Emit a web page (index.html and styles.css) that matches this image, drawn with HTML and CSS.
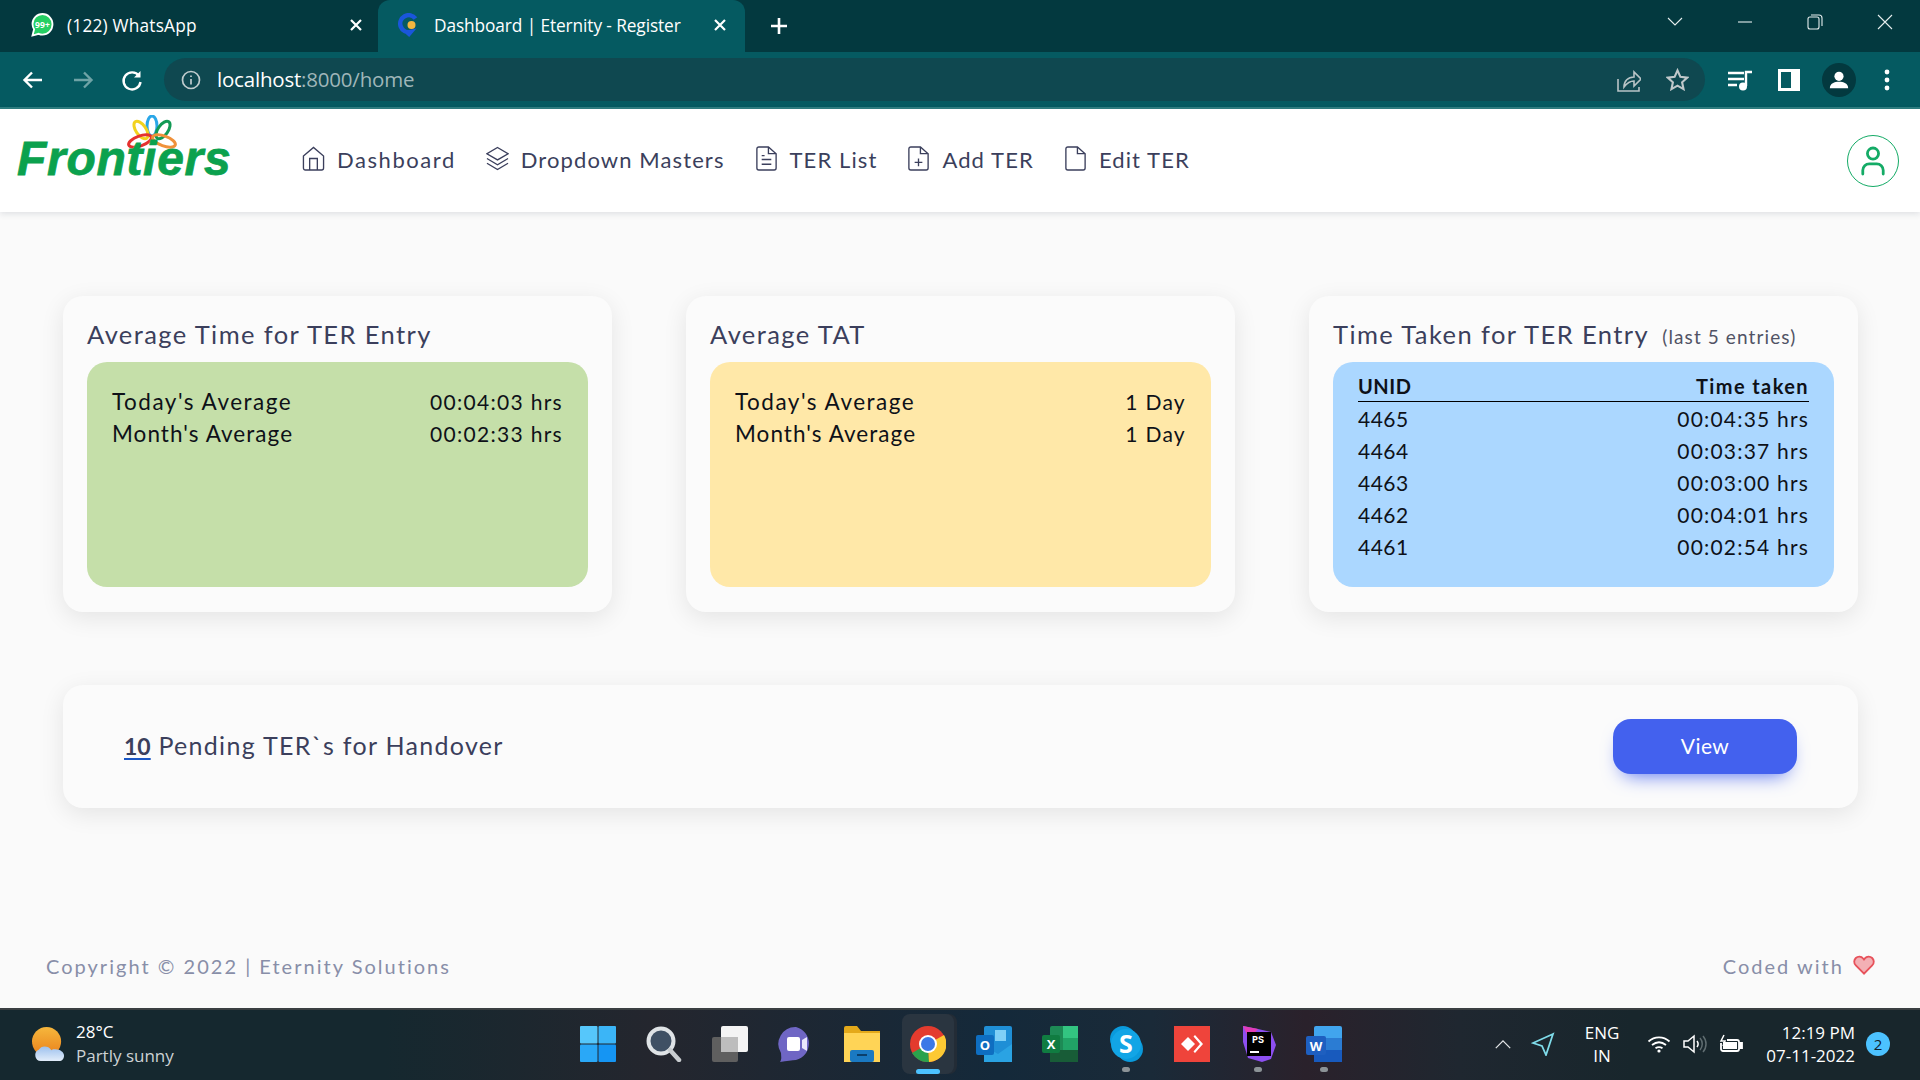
FILE: index.html
```html
<!DOCTYPE html>
<html lang="en">
<head>
<meta charset="utf-8">
<title>Dashboard | Eternity - Register</title>
<link rel="stylesheet" href="styles.css">
</head>
<body>
<div class="screen">
  <div class="tabstrip">
    <div class="tab tab-one">
      <svg class="tab-icon" viewBox="0 0 22 24"><path d="M11 1C5.500 1 1 5.500 1 11c0 2 .6 3.800 1.600 5.300L1 22.500l6.200-1.700C8.400 21.300 9.700 21.600 11 21.600c5.500 0 10-4.700 10-10.300S16.500 1 11 1z" fill="#25cf63" stroke="#fff" stroke-width="1.800"/><text x="11" y="15" text-anchor="middle" class="tab-badge">99+</text></svg>
      <span class="tab-title">(122) WhatsApp</span>
      <svg class="tab-close" viewBox="0 0 14 14"><path d="M2 2l10 10M12 2L2 12"/></svg>
    </div>
    <div class="tab tab-two">
      <svg class="tab-icon" viewBox="0 0 22 24"><path d="M17 5.500A8.500 8.500 0 1 0 12 19l-3 3.500" fill="none" stroke="#1a56db" stroke-width="4.500"/><circle cx="13" cy="12" r="4" fill="#f4b63f"/></svg>
      <span class="tab-title">Dashboard | Eternity - Register</span>
      <svg class="tab-close" viewBox="0 0 14 14"><path d="M2 2l10 10M12 2L2 12"/></svg>
    </div>
    <svg class="new-tab" viewBox="0 0 20 20"><path d="M10 2v16M2 10h16"/></svg>
    <div class="window-controls">
      <svg viewBox="0 0 18 12"><path d="M2 2l7 7 7-7"/></svg>
      <svg viewBox="0 0 18 12"><path d="M2 6h14"/></svg>
      <svg viewBox="0 0 18 18"><rect x="2" y="4" width="11" height="12" rx="2"/><path d="M5 2h8a3 3 0 0 1 3 3v8"/></svg>
      <svg viewBox="0 0 18 18"><path d="M2 2l14 14M16 2L2 16"/></svg>
    </div>
  </div>

  <div class="toolbar">
    <svg class="tool-btn" viewBox="0 0 24 24"><path d="M21 12H4M11 4.500L3.500 12l7.500 7.500" class="tool-line"/></svg>
    <svg class="tool-btn" viewBox="0 0 24 24"><path d="M3 12h17M13 4.500l7.500 7.500-7.500 7.500" class="tool-line tool-dim"/></svg>
    <svg class="tool-btn" viewBox="0 0 24 24"><path d="M19 8a8.500 8.500 0 1 0 1.500 6" class="tool-line"/><path d="M20.500 3v6.500H14z" fill="#fff"/></svg>
    <div class="omnibox">
      <svg class="info" viewBox="0 0 20 20"><circle cx="10" cy="10" r="8.500"/><path d="M10 9v5.500M10 5.500v1.500"/></svg>
      <span class="url"><span class="host">localhost</span>:8000/home</span>
      <span class="omni-space"></span>
      <svg class="omni-share" viewBox="0 0 24 24"><path d="M1 11v12h21v-4M7 19c0-6 4-10 10-10V4l7 7-7 7v-5c-4 0-7 2-10 6z"/></svg>
      <svg class="omni-star" viewBox="0 0 24 24"><path d="M12 2.500l3 6.700 7.200.8-5.400 4.900 1.500 7.100-6.300-3.600-6.300 3.600 1.500-7.100L1.800 10l7.200-.8z"/></svg>
    </div>
    <svg class="media" viewBox="0 0 26 22"><path d="M1 4h16M1 10h16M1 16h9" class="tool-line"/><path d="M19 17V3h6" class="tool-line"/><circle cx="16" cy="17.500" r="4" fill="#fff"/></svg>
    <svg class="side" viewBox="0 0 22 22"><path fill-rule="evenodd" d="M0 0h22v22H0zM3 3v16h10V3z" fill="#fff"/></svg>
    <div class="avatar"><svg viewBox="0 0 24 24"><circle cx="12" cy="8" r="5" fill="#fff"/><path d="M2 21c0-5 5-7 10-7s10 2 10 7z" fill="#fff"/></svg></div>
    <svg class="kebab" viewBox="0 0 6 22"><circle cx="3" cy="3" r="2.400"/><circle cx="3" cy="11" r="2.400"/><circle cx="3" cy="19" r="2.400"/></svg>
  </div>

  <header class="nav">
    <div class="logo">
      <svg class="flower" viewBox="0 0 52 36">
        <ellipse cx="26" cy="11" rx="5" ry="10" fill="none" stroke="#2aa7e8" stroke-width="3"/>
        <ellipse cx="15" cy="15" rx="5" ry="10" transform="rotate(-35 15 15)" fill="none" stroke="#f2d21f" stroke-width="3"/>
        <ellipse cx="37" cy="15" rx="5" ry="10" transform="rotate(35 37 15)" fill="none" stroke="#129a55" stroke-width="3"/>
        <ellipse cx="14" cy="26" rx="12" ry="5" transform="rotate(-20 14 26)" fill="none" stroke="#e5312f" stroke-width="3"/>
        <ellipse cx="38" cy="26" rx="12" ry="5" transform="rotate(20 38 26)" fill="none" stroke="#f0913a" stroke-width="3"/>
      </svg>
      <span class="logo-text">Frontiers</span>
    </div>
    <nav class="menu">
      <a class="menu-item menu-first"><svg viewBox="0 0 24 26"><path d="M1.500 10.500L12 1.500l10.500 9V23a2 2 0 0 1-2 2h-17a2 2 0 0 1-2-2z"/><path d="M8 25V13h8v12"/></svg><span>Dashboard</span></a>
      <a class="menu-item"><svg viewBox="0 0 24 26"><path d="M12 1.500L23 8l-11 6.500L1 8z"/><path d="M1 13l11 6.500L23 13M1 18l11 6.500L23 18"/></svg><span>Dropdown Masters</span></a>
      <a class="menu-item"><svg viewBox="0 0 22 26"><path d="M13 1H3a2 2 0 0 0-2 2v20a2 2 0 0 0 2 2h16a2 2 0 0 0 2-2V8z"/><path d="M13 1v7h8M6 10h3M6 14h10M6 19h10"/></svg><span>TER List</span></a>
      <a class="menu-item"><svg viewBox="0 0 22 26"><path d="M13 1H3a2 2 0 0 0-2 2v20a2 2 0 0 0 2 2h16a2 2 0 0 0 2-2V8z"/><path d="M13 1v7h8M11 13v8M7 17h8"/></svg><span>Add TER</span></a>
      <a class="menu-item"><svg viewBox="0 0 22 26"><path d="M13 1H3a2 2 0 0 0-2 2v20a2 2 0 0 0 2 2h16a2 2 0 0 0 2-2V8z"/><path d="M13 1v7h8"/></svg><span>Edit TER</span></a>
    </nav>
    <div class="profile"><svg viewBox="0 0 28 32"><circle cx="14" cy="8" r="6"/><path d="M3 30v-4a7 7 0 0 1 7-7h8a7 7 0 0 1 7 7v4"/></svg></div>
  </header>

  <main class="main">
    <section class="cards">
      <article class="card">
        <h2 class="card-title">Average Time for TER Entry</h2>
        <div class="panel panel-green">
          <div class="row"><span class="label">Today's Average</span><span>00:04:03 hrs</span></div>
          <div class="row"><span class="label label-tight">Month's Average</span><span>00:02:33 hrs</span></div>
        </div>
      </article>
      <article class="card">
        <h2 class="card-title">Average TAT</h2>
        <div class="panel panel-yellow">
          <div class="row"><span class="label">Today's Average</span><span>1 Day</span></div>
          <div class="row"><span class="label label-tight">Month's Average</span><span>1 Day</span></div>
        </div>
      </article>
      <article class="card">
        <h2 class="card-title">Time Taken for TER Entry <small class="card-note">(last 5 entries)</small></h2>
        <div class="panel panel-blue">
          <div class="row row-head"><span>UNID</span><span>Time taken</span></div>
          <div class="row"><span>4465</span><span>00:04:35 hrs</span></div>
          <div class="row"><span>4464</span><span>00:03:37 hrs</span></div>
          <div class="row"><span>4463</span><span>00:03:00 hrs</span></div>
          <div class="row"><span>4462</span><span>00:04:01 hrs</span></div>
          <div class="row"><span>4461</span><span>00:02:54 hrs</span></div>
        </div>
      </article>
    </section>
    <section class="pending">
      <p class="pending-text"><a class="pending-count">10</a> Pending TER`s for Handover</p>
      <button class="view-btn">View</button>
    </section>
    <footer class="footer">
      <span>Copyright © 2022 | Eternity Solutions</span>
      <span class="coded">Coded with <svg viewBox="0 0 24 22"><path d="M12 20.500L3 11.500C.5 9 .8 5.500 3 3.300c2.400-2.200 6-2 8 .5l1 1.200 1-1.200c2-2.500 5.600-2.700 8-.5 2.200 2.200 2.500 5.700 0 8.200z"/></svg></span>
    </footer>
  </main>

  <div class="taskbar">
    <div class="weather">
      <svg class="weather-icon" viewBox="0 0 34 36"><defs><linearGradient id="sun" x1="0" y1="0" x2="0" y2="1"><stop offset="0" stop-color="#f6b73c"/><stop offset="1" stop-color="#e9801c"/></linearGradient><linearGradient id="cl" x1="0" y1="0" x2="0" y2="1"><stop offset="0" stop-color="#9cc0ee"/><stop offset="1" stop-color="#e2edfa"/></linearGradient></defs><circle cx="15" cy="15" r="15" fill="url(#sun)"/><path d="M9 35a6 6 0 0 1-2-11.500 7 7 0 0 1 6-3.500c3 0 5 1 7 4 1-1 2-1 4-1 5 0 9 3 9 6.500 0 3-2 5.500-5 5.500z" fill="url(#cl)"/></svg>
      <div class="weather-text"><span class="temp">28°C</span><span class="cond">Partly sunny</span></div>
    </div>
    <div class="apps">
      <div class="app"><svg viewBox="0 0 36 36"><rect x="0" y="0" width="17.500" height="17.500" rx="1" fill="#56c7fb"/><rect x="18.500" y="0" width="17.500" height="17.500" rx="1" fill="#3bb5f7"/><rect x="0" y="18.500" width="17.500" height="17.500" rx="1" fill="#2aa8f7"/><rect x="18.500" y="18.500" width="17.500" height="17.500" rx="1" fill="#1595f3"/></svg></div>
      <div class="app"><svg viewBox="0 0 36 36"><circle cx="15" cy="15" r="12.500" fill="#3f5064" stroke="#dfe3e6" stroke-width="4"/><path d="M24 24l9 10" stroke="#c9cdd0" stroke-width="4.500" stroke-linecap="round"/></svg></div>
      <div class="app"><svg viewBox="0 0 36 36"><rect x="0" y="11" width="26" height="25" rx="2" fill="#5f5f5f"/><rect x="9" y="0" width="27" height="26" rx="2" fill="#f4f4f4"/><rect x="9" y="11" width="17" height="15" fill="#bdbdbd"/></svg></div>
      <div class="app"><svg viewBox="0 0 36 36"><path d="M18 1a17 17 0 0 1 0 33c-4 0-9 1-16 2 2-3 1-6 1-9A17 17 0 0 1 18 1z" fill="#6f66c4"/><rect x="9" y="11" width="13" height="14" rx="2" fill="#fff"/><path d="M24 14l5-3v14l-5-3z" fill="#e9e7fb"/></svg></div>
      <div class="app"><svg viewBox="0 0 36 36"><path d="M0 2a2 2 0 0 1 2-2h11l4 5h19v31H0z" fill="#e4a91a"/><path d="M0 7h36v29H0z" fill="#ffd456"/><rect x="6" y="24" width="24" height="12" rx="2" fill="#1a79c2"/><rect x="13" y="28" width="10" height="2" fill="#0b3f6c"/></svg></div>
      <div class="app app-active"><svg viewBox="0 0 36 36"><circle cx="18" cy="18" r="18" fill="#e33b2e"/><path d="M18 18L2 27A18 18 0 0 0 19 36z" fill="#2ba24c"/><path d="M18 18l1 18A18 18 0 0 0 34 9z" fill="#fcc934"/><circle cx="18" cy="18" r="9" fill="#fff"/><circle cx="18" cy="18" r="7" fill="#3b78e7"/></svg><span class="pill"></span></div>
      <div class="app"><svg viewBox="0 0 36 36"><rect x="8" y="0" width="28" height="36" rx="2" fill="#1f8fd6"/><rect x="19" y="4" width="11" height="11" fill="#7fd0f7"/><path d="M8 20l14 8 14-10v18H8z" fill="#2aa3e3"/><rect x="0" y="9" width="18" height="20" rx="2" fill="#0e6ec1"/><text x="9" y="24" text-anchor="middle" class="app-letter">O</text></svg></div>
      <div class="app"><svg viewBox="0 0 36 36"><rect x="8" y="0" width="28" height="36" rx="2" fill="#1d8a55"/><rect x="21" y="0" width="15" height="12" fill="#33c481"/><rect x="21" y="12" width="15" height="12" fill="#21a366"/><rect x="8" y="24" width="28" height="12" fill="#185c37"/><rect x="0" y="9" width="18" height="18" rx="2" fill="#107c41"/><text x="9" y="23" text-anchor="middle" class="app-letter">X</text></svg></div>
      <div class="app app-run"><svg viewBox="0 0 36 36"><circle cx="15" cy="13" r="13" fill="#0a9adc"/><circle cx="22" cy="23" r="13" fill="#0a9adc"/><circle cx="18" cy="18" r="15" fill="#12a5e6"/><text x="18" y="27" text-anchor="middle" class="app-skype">S</text></svg><span class="dot"></span></div>
      <div class="app"><svg viewBox="0 0 36 36"><rect width="36" height="36" fill="#ef443b"/><path d="M7 18l7-7 7 7-7 7z" fill="#fff"/><path d="M21 9l8 9-8 9-1.500-1.500 6.500-7.500-6.500-7.500z" fill="#fff"/></svg></div>
      <div class="app app-run"><svg viewBox="0 0 36 36"><path d="M3 0l15 3 13 3 5 13-5 14-9 3-14-4-5-16z" fill="#8d4ff0"/><path d="M3 0l15 3-9 10z" fill="#e23cb8"/><rect x="7" y="6" width="24" height="24" fill="#000"/><text x="18" y="17" text-anchor="middle" class="app-ps">PS</text><rect x="10" y="25" width="9" height="2" fill="#fff"/></svg><span class="dot"></span></div>
      <div class="app app-run"><svg viewBox="0 0 36 36"><rect x="8" y="0" width="28" height="36" rx="2" fill="#41a5ee"/><rect x="8" y="12" width="28" height="12" fill="#2b7cd3"/><rect x="8" y="24" width="28" height="12" fill="#185abd"/><rect x="0" y="10" width="20" height="19" rx="2" fill="#1e5fc0"/><text x="10" y="25" text-anchor="middle" class="app-letter">W</text></svg><span class="dot"></span></div>
    </div>
    <div class="tray">
      <svg class="caret" viewBox="0 0 20 12"><path d="M2 10l8-8 8 8"/></svg>
      <svg class="loc" viewBox="0 0 24 24"><path d="M22 2L2 11l9 3 4 9z"/></svg>
      <div class="lang"><span>ENG</span><span>IN</span></div>
      <svg class="wifi" viewBox="0 0 24 18"><path d="M1.500 6.500C7.500 1 16.500 1 22.500 6.500M5 10c4.500-3.500 9.500-3.500 14 0M8.500 13.300c2.500-1.700 4.500-1.700 7 0"/><circle cx="12" cy="16" r="1.600" fill="#fff" stroke="none"/></svg>
      <svg class="vol" viewBox="0 0 24 20"><path d="M1 7v6h4l6 5V2L5 7z"/><path d="M14 7c1.500 2 1.500 4 0 6"/><path class="vol-dim" d="M17 4c3 3.500 3 8.500 0 12M20 2c4 4.500 4 11.500 0 16"/></svg>
      <svg class="batt" viewBox="0 0 24 18"><path d="M8 5h10a2 2 0 0 1 2 2v7a2 2 0 0 1-2 2H4a2 2 0 0 1-2-2V8"/><rect x="4" y="7" width="14" height="7" fill="#fff" stroke="none"/><path d="M21 8h2v5h-2z" fill="#fff"/><path d="M5 0L2 6h4l-2 5" stroke-width="1.500"/></svg>
      <div class="clock"><span>12:19 PM</span><span>07-11-2022</span></div>
      <span class="badge">2</span>
    </div>
  </div>
</div>
</body>
</html>
```
FILE: styles.css
```css
* { box-sizing: border-box; }
html, body { margin: 0; padding: 0; }
body { width: 1920px; height: 1080px; overflow: hidden; font-family: "Lato", "Open Sans", sans-serif; background: #fafafa; }
.screen { width: 1920px; height: 1080px; display: flex; flex-direction: column; }

/* tab strip */
.tabstrip { height: 52px; flex: none; background: #03393f; display: flex; align-items: stretch; color: #fff; font-family: "Open Sans", sans-serif; }
.tab { display: flex; align-items: center; font-size: 17.300px; padding-bottom: 2px; }
.tab-one { width: 378px; padding-left: 31px; padding-right: 15px; letter-spacing: 0.2px; }
.tab-two { width: 367px; padding-left: 20px; padding-right: 18px; background: #055a61; border-radius: 12px 12px 0 0; }
.tab-icon { width: 23px; height: 24px; flex: none; }
.tab-badge { font: 700 8.500px "Open Sans", sans-serif; fill: #fff; }
.tab-title { margin-left: 13px; flex: 1; white-space: nowrap; }
.tab-two .tab-title { letter-spacing: -0.1px; }
.tab-one .tab-title { letter-spacing: 0.2px; }
.tab-close { width: 14px; height: 14px; flex: none; }
.tab-close path { stroke: #fff; stroke-width: 2.200; fill: none; }
.new-tab { width: 20px; height: 20px; margin: 16px 0 0 24px; }
.new-tab path { stroke: #fff; stroke-width: 2.600; fill: none; }
.window-controls { margin-left: auto; display: flex; align-items: center; padding: 0 26px 0 0; gap: 52px; height: 44px; }
.window-controls svg { width: 18px; height: 18px; fill: none; stroke: #e6eeee; stroke-width: 1.100; }

/* toolbar */
.toolbar { height: 57px; flex: none; background: #055a61; border-bottom: 2px solid #2f7d80; display: flex; align-items: center; padding: 0 0 0 21px; }
.tool-btn { width: 24px; height: 24px; flex: none; margin-right: 25.500px; }
.tool-line { fill: none; stroke: #fff; stroke-width: 2.400; }
.tool-dim { stroke: #6fa3a6; }
.omnibox { margin-left: -5.500px; width: 1541px; height: 43px; background: #0f4850; border-radius: 22px; display: flex; align-items: center; padding: 0 16px 0 17px; font-family: "Open Sans", sans-serif; font-size: 20.500px; color: #9fb6b9; }
.info { width: 20px; height: 20px; flex: none; fill: none; stroke: #c0ccce; stroke-width: 1.700; }
.url { margin: 0 0 2px 16px; letter-spacing: -0.2px; }
.host { color: #fff; }
.omni-space { flex: 1; }
.omni-share { width: 24px; height: 24px; margin-right: 25px; fill: none; stroke: #b8c4c6; stroke-width: 1.600; }
.omni-star { width: 23px; height: 23px; fill: none; stroke: #c0c8ca; stroke-width: 2.200; }
.media { width: 26px; height: 22px; flex: none; margin-left: 21.500px; }
.side { width: 22px; height: 22px; flex: none; margin-left: 25px; }
.avatar { width: 34px; height: 34px; margin-left: 22px; flex: none; border-radius: 50%; background: #03393f; display: flex; align-items: center; justify-content: center; }
.avatar svg { width: 22px; height: 22px; }
.kebab { width: 6px; height: 22px; flex: none; margin-left: 28px; fill: #fff; }

/* nav */
.nav { height: 103px; flex: none; background: #fff; display: flex; align-items: center; box-shadow: 0 2px 6px rgba(60, 70, 90, 0.14); position: relative; z-index: 1; padding: 0 21.500px 0 17px; color: #3b3f5c; }
.logo { width: 285px; height: 103px; flex: none; position: relative; }
.flower { position: absolute; left: 109px; top: 6px; width: 52px; height: 36px; }
.logo-text { position: absolute; left: 0; top: 20px; font: italic 700 48px/60px "Liberation Sans", sans-serif; color: #0ba14e; letter-spacing: 0.7px; -webkit-text-stroke: 0.8px #0ba14e; }
.menu { display: flex; align-items: center; gap: 30px; padding-bottom: 2px; }
.menu-item { display: flex; align-items: center; gap: 12px; font-size: 22px; letter-spacing: 1.100px; white-space: nowrap; }
.menu-first { letter-spacing: 1.550px; }
.menu-item svg { width: 23px; height: 25px; flex: none; fill: none; stroke: #3b3f5c; stroke-width: 1.400; margin-top: -3px; }
.profile { margin-left: auto; width: 52px; height: 52px; border: 1.500px solid #14ab66; border-radius: 50%; display: flex; align-items: center; justify-content: center; }
.profile svg { width: 26px; height: 30px; fill: none; stroke: #14ab66; stroke-width: 3; stroke-linecap: round; }

/* main */
.main { flex: 1; min-height: 0; display: flex; flex-direction: column; padding: 84px 62px 0 63px; }
.cards { display: grid; grid-template-columns: repeat(3, 549px); grid-template-rows: 316px; column-gap: 74px; height: 316px; flex: none; }
.card { height: 316px; background: #fbfbfb; border-radius: 20px; padding: 24px 24px 25px; box-shadow: 0 6px 24px rgba(0, 0, 0, 0.09); display: flex; flex-direction: column; }
.card-title { height: 28px; margin: 0 0 14px; font-size: 25.500px; line-height: 28px; font-weight: 400; color: #3b3f5c; letter-spacing: 1.400px; white-space: nowrap; }
.card-note { font-size: 19px; letter-spacing: 1.100px; color: #515365; margin-left: 6px; }
.panel { flex: 1; min-height: 0; border-radius: 20px; padding: 23px 25px 0; font-size: 21px; color: #0e1118; letter-spacing: 1.300px; }
.panel-green { background: #c5dfa9; }
.panel-yellow { background: #ffe8a8; }
.panel-blue { background: #abd7ff; padding-top: 8px; letter-spacing: 1.200px; }
.panel-blue .row span:first-child { letter-spacing: 0.500px; }
.row { display: flex; justify-content: space-between; height: 32.200px; align-items: center; white-space: nowrap; }
.label { font-size: 22.500px; letter-spacing: 1.500px; }
.label-tight { letter-spacing: 1.050px; }
.row-head { height: 32px; border-bottom: 1.500px solid #000; font-weight: 700; font-size: 20px; letter-spacing: 1.400px; }

.pending { margin-top: 73px; height: 123px; flex: none; background: #fbfbfb; border-radius: 20px; box-shadow: 0 6px 24px rgba(0, 0, 0, 0.09); display: flex; align-items: center; justify-content: space-between; padding: 0 61px 0 61px; }
.pending-text { margin: 0 0 3px; font-size: 25px; color: #3b3f5c; letter-spacing: 1.300px; white-space: nowrap; }
.pending-count { color: #3b3f5c; font-weight: 700; font-size: 23px; letter-spacing: 0; text-decoration: underline; text-decoration-color: #1a56c4; text-decoration-thickness: 2px; text-underline-offset: 3px; }
.view-btn { width: 184px; height: 55px; border: 0; border-radius: 18px; padding: 0 0 2px; background: #4361ee; color: #fff; font: 400 21px "Lato", sans-serif; letter-spacing: 0.400px; box-shadow: 0 10px 20px -10px #4361ee; }

.footer { margin-top: auto; height: 56px; padding: 0 0 28px 0; margin-left: -17px; margin-right: -17px; display: flex; align-items: center; justify-content: space-between; font-size: 20px; letter-spacing: 2.020px; color: #888ea8; }
.coded { display: flex; align-items: center; gap: 9px; }
.coded svg { width: 22px; height: 20px; margin-top: -2px; fill: #f3b0b5; stroke: #e7515a; stroke-width: 2; }

/* taskbar */
.taskbar { height: 72px; flex: none; border-top: 2px solid #3a3f42; padding-bottom: 2px; background: linear-gradient(90deg, #15282f 0%, #15282f 20%, #24262e 34%, #14293a 52%, #1a2a38 60%, #2a212b 68%, #1f2730 76%, #18262c 85%, #18262c 100%); display: grid; grid-template-columns: 565px 792px 1fr; color: #fff; font-family: "Open Sans", sans-serif; }
.weather { display: flex; align-items: center; padding-left: 32px; gap: 11px; }
.weather-icon { width: 33px; height: 35px; flex: none; }
.weather-text { display: flex; flex-direction: column; font-size: 17px; line-height: 24px; }
.cond { color: #ccd2d4; }
.apps { display: flex; align-items: center; }
.app { width: 66px; height: 60px; flex: none; display: flex; align-items: center; justify-content: center; position: relative; }
.app svg { width: 36px; height: 36px; }
.app-active { width: 52px; margin: 0 7px; border-radius: 8px; background: #2a3540; box-shadow: 3px 0 0 0 #232c36; }
.pill { position: absolute; left: 14px; bottom: 0; width: 24px; height: 5px; border-radius: 3px; background: #4cc2ff; }
.dot { position: absolute; left: 29px; bottom: 2px; width: 8px; height: 5px; border-radius: 3px; background: #8c9397; }
.app-letter { font: 700 13px "Open Sans", sans-serif; fill: #fff; }
.app-skype { font: 700 25px "Open Sans", sans-serif; fill: #fff; }
.app-ps { font: 700 10px "Liberation Mono", monospace; fill: #fff; }
.tray { display: flex; align-items: center; padding-left: 137px; font-size: 17px; line-height: 23px; }
.caret { width: 18px; height: 11px; fill: none; stroke: #e4e7e8; stroke-width: 1.400; flex: none; }
.loc { width: 24px; height: 24px; margin-left: 19px; fill: none; stroke: #7fdcea; stroke-width: 1.800; flex: none; }
.lang { margin-left: 28px; width: 38px; display: flex; flex-direction: column; align-items: center; flex: none; }
.wifi { width: 24px; height: 18px; margin-left: 26px; fill: none; stroke: #fff; stroke-width: 1.800; flex: none; }
.vol { width: 24px; height: 20px; margin-left: 12px; fill: none; stroke: #fff; stroke-width: 1.500; flex: none; }
.vol-dim { stroke: #5f6c70; }
.batt { width: 24px; height: 20px; margin-left: 12px; fill: none; stroke: #fff; stroke-width: 1.800; flex: none; }
.clock { margin-left: 24px; width: 88px; display: flex; flex-direction: column; align-items: flex-end; flex: none; white-space: nowrap; }
.badge { margin-left: 11px; width: 24px; height: 24px; border-radius: 50%; background: #4cc2ff; color: #10202a; font-size: 15px; display: flex; align-items: center; justify-content: center; flex: none; }
```
